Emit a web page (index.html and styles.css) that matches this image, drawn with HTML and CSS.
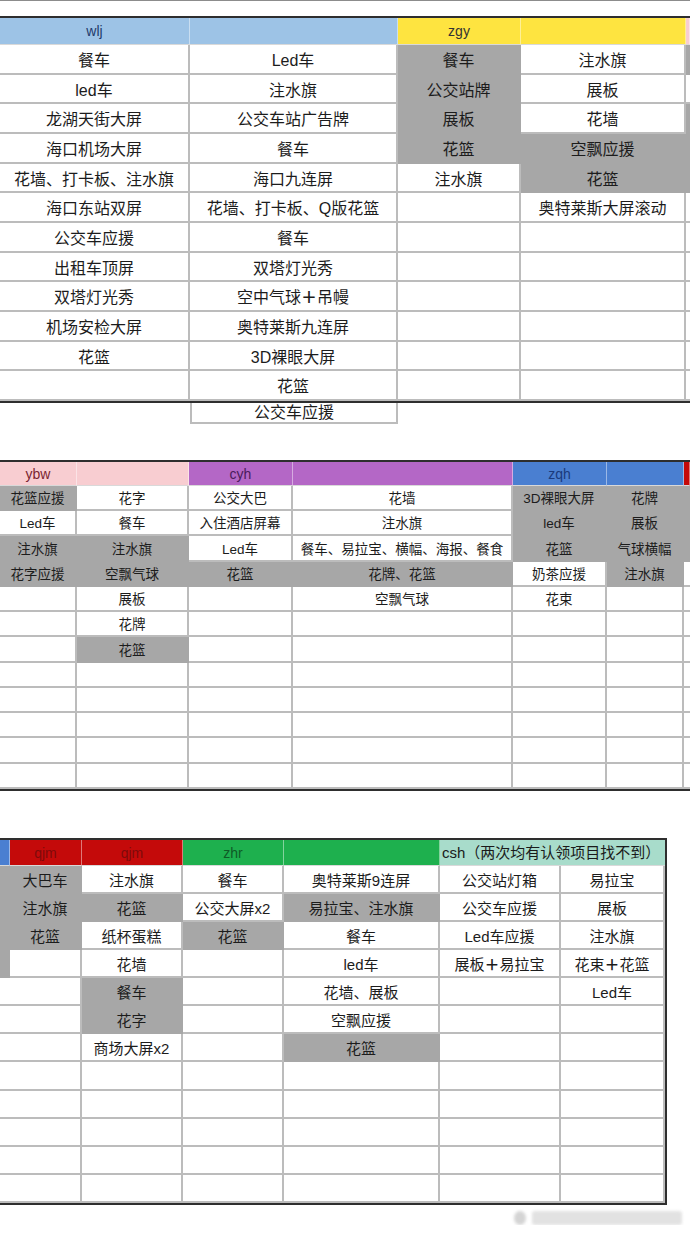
FILE: index.html
```html
<!DOCTYPE html>
<html lang="zh-CN">
<head>
<meta charset="utf-8">
<title>认领表</title>
<link rel="stylesheet" href="styles.css">
</head>
<body>
<div class="topline"></div>

<div class="sheet t1">
  <div class="c h blue1 hl">wlj</div>
  <div class="c h blue1"></div>
  <div class="c h yellow hd">zgy</div>
  <div class="c h yellow"></div>
  <div class="c h pink s"></div>

  <div class="c">餐车</div><div class="c">Led车</div><div class="c g">餐车</div><div class="c">注水旗</div><div class="c g s"></div>
  <div class="c">led车</div><div class="c">注水旗</div><div class="c g">公交站牌</div><div class="c">展板</div><div class="c s"></div>
  <div class="c">龙湖天街大屏</div><div class="c">公交车站广告牌</div><div class="c g">展板</div><div class="c">花墙</div><div class="c g s"></div>
  <div class="c">海口机场大屏</div><div class="c">餐车</div><div class="c g">花篮</div><div class="c g">空飘应援</div><div class="c g s"></div>
  <div class="c">花墙、打卡板、注水旗</div><div class="c">海口九连屏</div><div class="c">注水旗</div><div class="c g">花篮</div><div class="c g s"></div>
  <div class="c">海口东站双屏</div><div class="c">花墙、打卡板、Q版花篮</div><div class="c"></div><div class="c">奥特莱斯大屏滚动</div><div class="c s"></div>
  <div class="c">公交车应援</div><div class="c">餐车</div><div class="c"></div><div class="c"></div><div class="c s"></div>
  <div class="c">出租车顶屏</div><div class="c">双塔灯光秀</div><div class="c"></div><div class="c"></div><div class="c s"></div>
  <div class="c">双塔灯光秀</div><div class="c">空中气球<span class="plus">＋</span>吊幔</div><div class="c"></div><div class="c"></div><div class="c s"></div>
  <div class="c">机场安检大屏</div><div class="c">奥特莱斯九连屏</div><div class="c"></div><div class="c"></div><div class="c s"></div>
  <div class="c">花篮</div><div class="c">3D裸眼大屏</div><div class="c"></div><div class="c"></div><div class="c s"></div>
  <div class="c"></div><div class="c">花篮</div><div class="c"></div><div class="c"></div><div class="c s"></div>
</div>
<div class="spill">
  <div class="spill-gap"></div>
  <div class="spill-box">公交车应援</div>
</div>

<div class="sheet t2">
  <div class="c h pink hm">ybw</div>
  <div class="c h pink"></div>
  <div class="c h purple hp">cyh</div>
  <div class="c h purple"></div>
  <div class="c h blue2 hn">zqh</div>
  <div class="c h blue2"></div>
  <div class="c h red s"></div>

  <div class="c g">花篮应援</div><div class="c">花字</div><div class="c">公交大巴</div><div class="c">花墙</div><div class="c g">3D裸眼大屏</div><div class="c g">花牌</div><div class="c g s"></div>
  <div class="c">Led车</div><div class="c">餐车</div><div class="c">入住酒店屏幕</div><div class="c">注水旗</div><div class="c g">led车</div><div class="c g">展板</div><div class="c g s"></div>
  <div class="c g">注水旗</div><div class="c g">注水旗</div><div class="c">Led车</div><div class="c">餐车、易拉宝、横幅、海报、餐食</div><div class="c g">花篮</div><div class="c g">气球横幅</div><div class="c g s"></div>
  <div class="c g">花字应援</div><div class="c g">空飘气球</div><div class="c g">花篮</div><div class="c g">花牌、花篮</div><div class="c">奶茶应援</div><div class="c g">注水旗</div><div class="c s"></div>
  <div class="c"></div><div class="c">展板</div><div class="c"></div><div class="c">空飘气球</div><div class="c">花束</div><div class="c"></div><div class="c s"></div>
  <div class="c"></div><div class="c">花牌</div><div class="c"></div><div class="c"></div><div class="c"></div><div class="c"></div><div class="c s"></div>
  <div class="c"></div><div class="c g">花篮</div><div class="c"></div><div class="c"></div><div class="c"></div><div class="c"></div><div class="c s"></div>
  <div class="c"></div><div class="c"></div><div class="c"></div><div class="c"></div><div class="c"></div><div class="c"></div><div class="c s"></div>
  <div class="c"></div><div class="c"></div><div class="c"></div><div class="c"></div><div class="c"></div><div class="c"></div><div class="c s"></div>
  <div class="c"></div><div class="c"></div><div class="c"></div><div class="c"></div><div class="c"></div><div class="c"></div><div class="c s"></div>
  <div class="c"></div><div class="c"></div><div class="c"></div><div class="c"></div><div class="c"></div><div class="c"></div><div class="c s"></div>
  <div class="c"></div><div class="c"></div><div class="c"></div><div class="c"></div><div class="c"></div><div class="c"></div><div class="c s"></div>
</div>

<div class="sheet t3">
  <div class="c h blue2"></div>
  <div class="c h red hr">qjm</div>
  <div class="c h red hr">qjm</div>
  <div class="c h green hg">zhr</div>
  <div class="c h green"></div>
  <div class="c h mint span2 hc">csh（两次均有认领项目找不到）</div>

  <div class="c g"></div><div class="c g">大巴车</div><div class="c">注水旗</div><div class="c">餐车</div><div class="c">奥特莱斯9连屏</div><div class="c">公交站灯箱</div><div class="c">易拉宝</div>
  <div class="c g"></div><div class="c g">注水旗</div><div class="c g">花篮</div><div class="c">公交大屏x2</div><div class="c g">易拉宝、注水旗</div><div class="c">公交车应援</div><div class="c">展板</div>
  <div class="c g"></div><div class="c g">花篮</div><div class="c">纸杯蛋糕</div><div class="c g">花篮</div><div class="c">餐车</div><div class="c">Led车应援</div><div class="c">注水旗</div>
  <div class="c g"></div><div class="c"></div><div class="c">花墙</div><div class="c"></div><div class="c">led车</div><div class="c">展板<span class="plus">＋</span>易拉宝</div><div class="c">花束<span class="plus">＋</span>花篮</div>
  <div class="c"></div><div class="c"></div><div class="c g">餐车</div><div class="c"></div><div class="c">花墙、展板</div><div class="c"></div><div class="c">Led车</div>
  <div class="c"></div><div class="c"></div><div class="c g">花字</div><div class="c"></div><div class="c">空飘应援</div><div class="c"></div><div class="c"></div>
  <div class="c"></div><div class="c"></div><div class="c">商场大屏x2</div><div class="c"></div><div class="c g">花篮</div><div class="c"></div><div class="c"></div>
  <div class="c"></div><div class="c"></div><div class="c"></div><div class="c"></div><div class="c"></div><div class="c"></div><div class="c"></div>
  <div class="c"></div><div class="c"></div><div class="c"></div><div class="c"></div><div class="c"></div><div class="c"></div><div class="c"></div>
  <div class="c"></div><div class="c"></div><div class="c"></div><div class="c"></div><div class="c"></div><div class="c"></div><div class="c"></div>
  <div class="c"></div><div class="c"></div><div class="c"></div><div class="c"></div><div class="c"></div><div class="c"></div><div class="c"></div>
  <div class="c"></div><div class="c"></div><div class="c"></div><div class="c"></div><div class="c"></div><div class="c"></div><div class="c"></div>
</div>

<div class="mark-row">
  <div class="mark">
    <span class="mark-icon"></span>
    <span class="mark-bar"></span>
  </div>
</div>
</body>
</html>
```

FILE: styles.css
```css
* {
  box-sizing: border-box;
}

html, body {
  margin: 0;
  padding: 0;
  background: #ffffff;
}

body {
  width: 690px;
  font-family: "Liberation Sans", "Noto Sans CJK SC", sans-serif;
  color: #1c1c1c;
  overflow: hidden;
}

.topline {
  height: 16px;
  border-top: 1px solid #8c8c8c;
}

.sheet {
  display: grid;
  border-top: 2px solid #2e2e2e;
  border-bottom: 2px solid #2e2e2e;
}

.t1 {
  width: 690px;
  grid-template-columns: 190px 208px 123px 165px 4px;
  grid-template-rows: 27px repeat(12, 29.67px);
  font-size: 16px;
}

.t2 {
  width: 690px;
  margin-top: 36px;
  grid-template-columns: 77px 112px 104px 220px 94px 77px 6px;
  grid-template-rows: 24px repeat(12, 25.25px);
  font-size: 13.5px;
}

.t3 {
  width: 667px;
  margin-top: 47px;
  border-right: 2px solid #2e2e2e;
  grid-template-columns: 10px 72px 101px 101px 156px 121px 104px;
  grid-template-rows: 26px repeat(12, 28.08px);
  font-size: 15px;
}

.c {
  display: flex;
  align-items: center;
  justify-content: center;
  white-space: nowrap;
  overflow: hidden;
  line-height: 1.1;
  padding-top: 4px;
  border-right: 2px solid #bcbcbc;
  border-bottom: 2px solid #bcbcbc;
  background: #ffffff;
}

.c.s {
  border-right: none;
}

.t3 .c:nth-child(7n) {
  border-right: none;
}

.t3 .c.span2 {
  border-right: none;
}

.c.g {
  background: #a7a7a7;
  border-color: #a7a7a7;
}

.c.h {
  padding-top: 2px;
  border-bottom: 1px solid #d9d9d9;
  border-right: 1px solid rgba(255, 255, 255, 0.45);
  font-size: 14px;
}

.span2 {
  grid-column: span 2;
  justify-content: flex-start;
  padding-left: 2px;
}

.t3 .c.hc {
  font-size: 15px;
  color: #1a1a1a;
}

.blue1 { background: #9dc3e6; }
.yellow { background: #fee440; }
.pink { background: #f8cdd1; }
.purple { background: #b467c6; }
.blue2 { background: #4a7fd1; }
.red { background: #c40a0a; }
.green { background: #1eb04e; }
.mint { background: #a8dccb; }

.hl { color: #1f3a6b; }
.hd { color: #333333; }
.hm { color: #7a2532; }
.hp { color: #4a1b5c; }
.hn { color: #1b3a7c; }
.hr { color: #7e0a0a; }
.hg { color: #0e5a26; }

.plus {
  font-weight: 700;
}

.spill {
  display: flex;
  height: 21px;
}

.spill-gap {
  width: 190px;
}

.spill-box {
  width: 208px;
  display: flex;
  align-items: center;
  justify-content: center;
  padding-top: 2px;
  font-size: 16px;
  line-height: 1;
  border-left: 2px solid #bcbcbc;
  border-right: 2px solid #bcbcbc;
  border-bottom: 2px solid #bcbcbc;
}

.mark-row {
  display: flex;
  justify-content: flex-end;
  padding: 6px 8px 0 0;
}

.mark {
  display: flex;
  align-items: center;
  gap: 6px;
  filter: blur(1.5px);
}

.mark-icon {
  width: 12px;
  height: 14px;
  border-radius: 50%;
  background: #d4d4d4;
}

.mark-bar {
  width: 150px;
  height: 14px;
  border-radius: 3px;
  background: #e2e2e2;
}
```
